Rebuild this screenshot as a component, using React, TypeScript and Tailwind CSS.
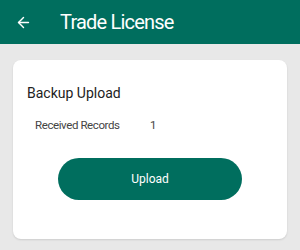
import { ArrowLeft } from 'lucide-react';

export default function App() {
  return (
    <div className="flex h-[250px] w-[300px] flex-col bg-[#e8e8e8] font-['Roboto',sans-serif]">
      <div className="flex h-[44px] items-center bg-[#006e5e] pl-[15px] text-white">
        <ArrowLeft size={17} strokeWidth={2} />
        <span className="ml-[28px] text-[20px] leading-none tracking-[-0.8px]">Trade License</span>
      </div>
      <div className="px-[13px] pt-[16px]">
        <div className="h-[179px] rounded-[8px] bg-white px-[14px] pt-[24px] shadow-[0_1px_2px_rgba(0,0,0,0.12)]">
          <div className="text-[14px] leading-[18px] text-[#222]">Backup Upload</div>
          <div className="mt-[16px] flex pl-[8px] text-[11.5px] leading-[14px] tracking-[-0.4px] text-[#444]">
            <span className="w-[115px]">Received Records</span>
            <span>1</span>
          </div>
          <div className="mt-[26px] flex justify-center">
            <button className="h-[42px] w-[184px] rounded-full bg-[#006e5e] text-[12px] text-white">
              Upload
            </button>
          </div>
        </div>
      </div>
    </div>
  );
}
